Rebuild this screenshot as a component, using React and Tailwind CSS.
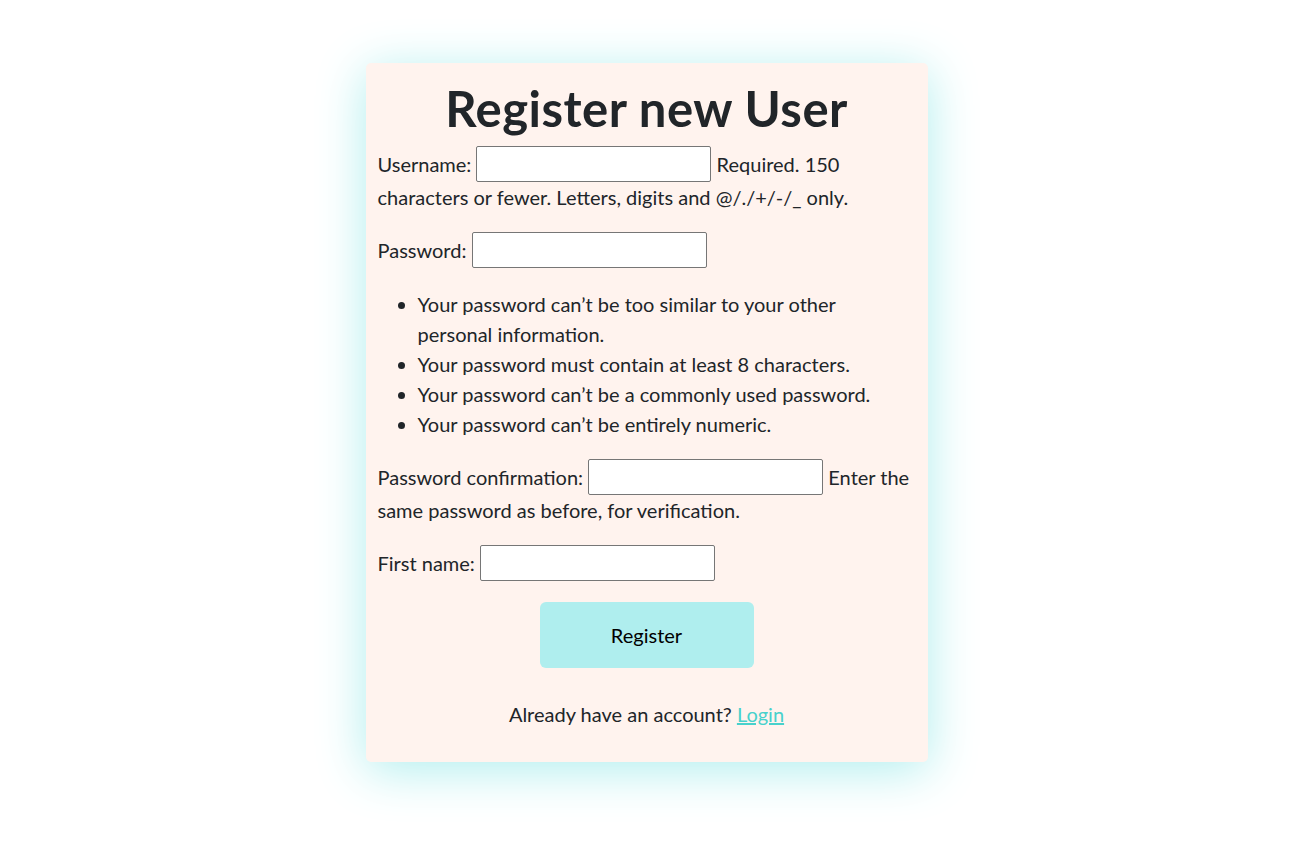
export default function App() {
  const font = { fontFamily: 'Lato, "Noto Sans", sans-serif' };
  const inputCls = "box-border inline-block h-[36px] w-[235px] rounded-[2px] border border-[#767676] bg-white align-baseline";
  return (
    <div className="flex min-h-[861px] justify-center bg-white pr-[12px] pt-[63px] text-[#212529]" style={font}>
      <div className="h-fit w-[562px] rounded-[5px] bg-[#fff3ee] px-3 pb-[33px] text-[20px] leading-[30px] shadow-[0_8px_50px_#afeeee]">
        <h1 className="pt-[16px] text-center text-[49px] font-bold leading-[58px] tracking-[0.5px]">Register new User</h1>
        <div className="mt-[9px]">
          <span>Username: </span>
          <input type="text" className={inputCls} />
          <span> Required. 150 characters or fewer. Letters, digits and @/./+/-/_ only.</span>
        </div>
        <div className="mt-[20px]">
          <span>Password: </span>
          <input type="password" className={inputCls} />
        </div>
        <ul className="mt-[21px] list-disc pl-[40px] pr-[4px]">
          <li>Your password can’t be too similar to your other personal information.</li>
          <li>Your password must contain at least 8 characters.</li>
          <li>Your password can’t be a commonly used password.</li>
          <li>Your password can’t be entirely numeric.</li>
        </ul>
        <div className="mt-[20px]">
          <span>Password confirmation: </span>
          <input type="password" className={inputCls} />
          <span> Enter the same password as before, for verification.</span>
        </div>
        <div className="mt-[20px]">
          <span>First name: </span>
          <input type="text" className={inputCls} />
        </div>
        <div className="mt-[21px] flex justify-center">
          <button type="button" className="h-[66px] w-[214px] rounded-md bg-[#afeeee] text-[20px] text-black">Register</button>
        </div>
        <p className="mt-[31px] text-center">
          Already have an account? <a href="#" className="text-[#48d1cc] underline">Login</a>
        </p>
      </div>
    </div>
  );
}
